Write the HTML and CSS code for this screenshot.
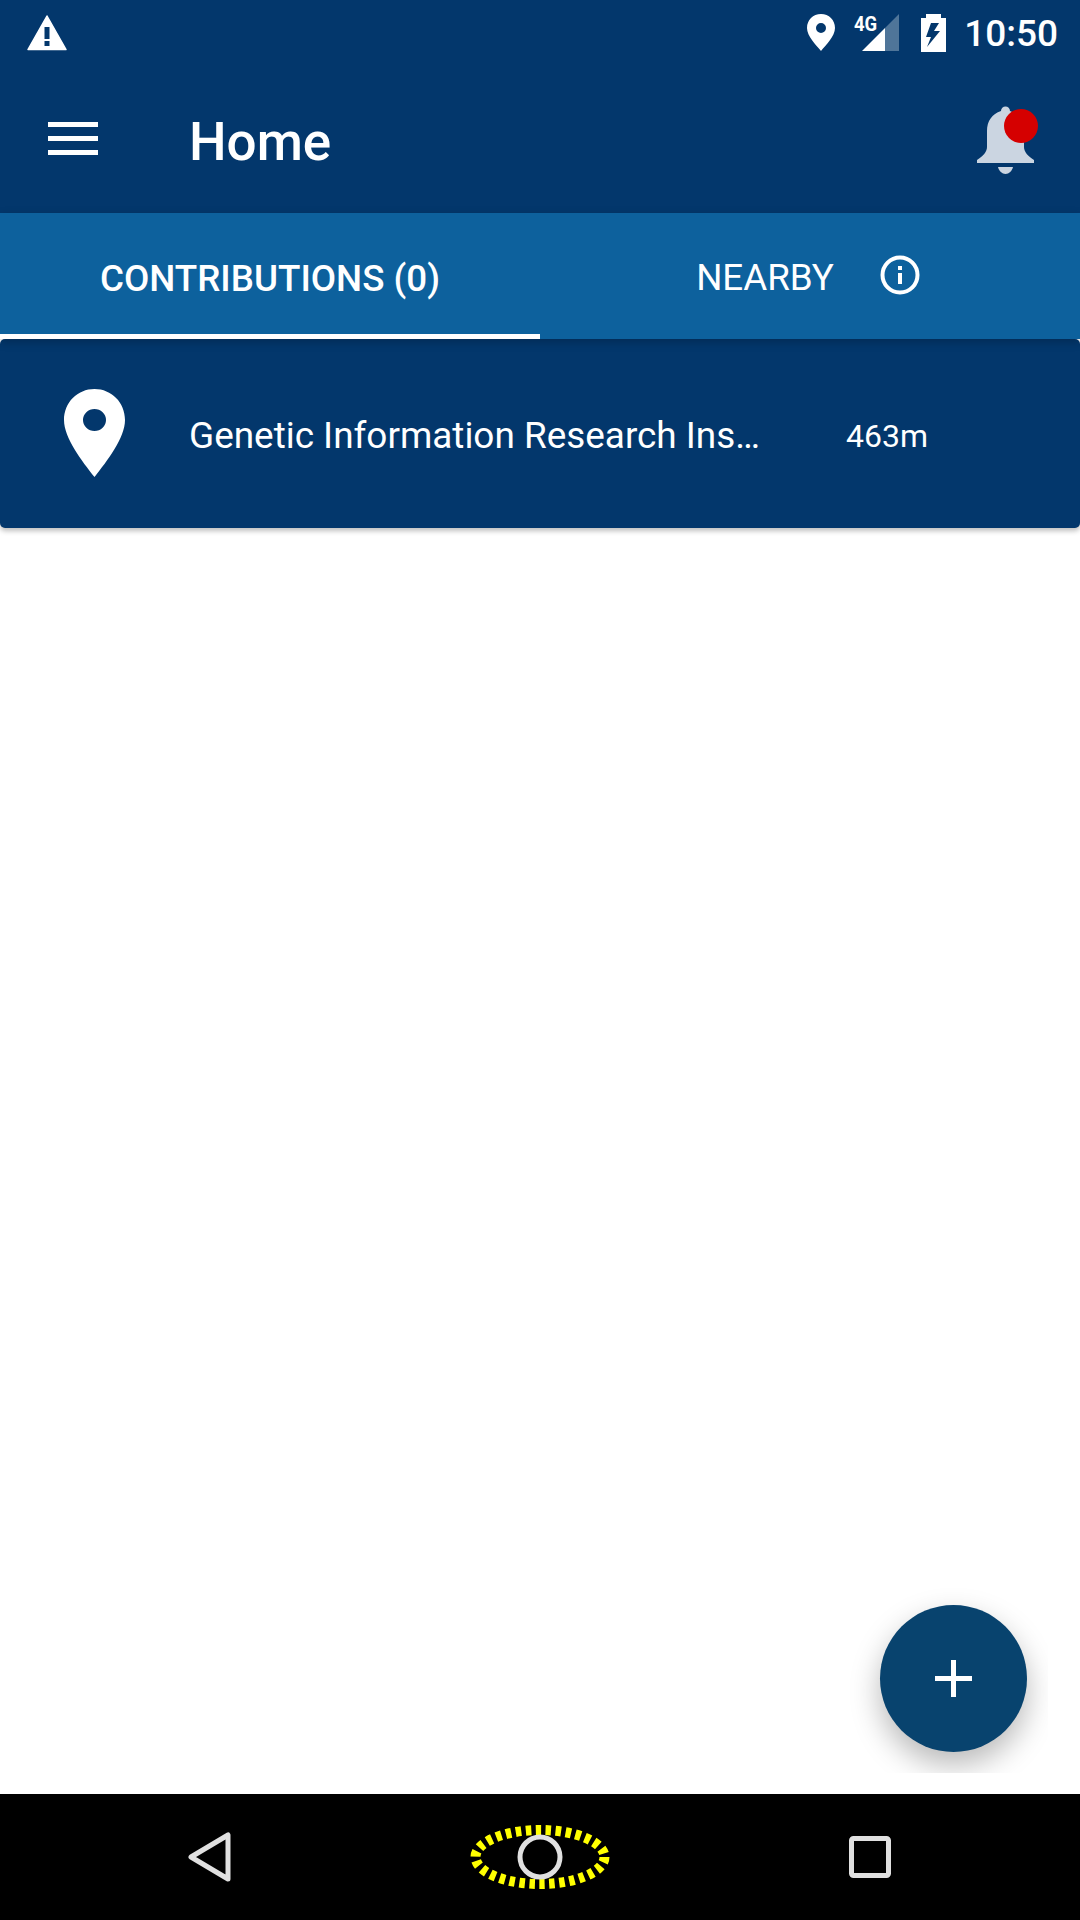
FILE: index.html
```html
<!DOCTYPE html>
<html lang="en">
<head>
    <meta charset="UTF-8">
    <meta name="viewport" content="width=device-width, initial-scale=1.0">
    <title>Home</title>
    <link rel="stylesheet" href="styles.css">
</head>
<body>
<div class="screen">
    <!-- status bar -->
    <div class="status-bar">
        <svg class="warn-icon" width="40" height="36" viewBox="0 0 40 36">
            <path fill="#fff" fill-rule="evenodd" stroke="#fff" stroke-width="1.5" stroke-linejoin="round" d="M20 1 L39 34.5 H1 Z"/>
            <path fill="#03376c" d="M17.5 12 H22.5 V24 H17.5 Z M17.5 26 H22.5 V31 H17.5 Z"/>
        </svg>
        <div class="status-right">
            <svg class="st-pin" width="28" height="37" viewBox="0 0 28 37">
                <path fill="#fff" fill-rule="evenodd" d="M14 0 C6 0 0 6 0 14 C0 22 9 31 14 37 C19 31 28 22 28 14 C28 6 22 0 14 0 Z M14 9 A5 5 0 1 1 14 19 A5 5 0 1 1 14 9 Z"/>
            </svg>
            <div class="signal">
                <span class="signal-text">4G</span>
                <svg width="46" height="37" viewBox="0 0 46 37">
                    <path fill="#4f7599" d="M46 0 V37 H32 V14 Z"/>
                    <path fill="#fff" d="M32 14 V37 H9 Z"/>
                </svg>
            </div>
            <svg class="st-battery" width="25" height="38" viewBox="0 0 25 38">
                <path fill="#fff" fill-rule="evenodd" d="M5 0 H20 V4 H25 V38 H0 V4 H5 Z M10 9 L5 23 H10 L6 33 L19 17 H13 L18 9 Z"/>
            </svg>
            <span class="clock">10:50</span>
        </div>
    </div>

    <!-- app bar -->
    <div class="app-bar">
        <div class="menu-btn">
            <span></span>
            <span></span>
            <span></span>
        </div>
        <div class="title">Home</div>
        <div class="bell">
            <svg width="57" height="69" viewBox="0 0 57 69">
                <path fill="#cbd5e1" d="M24 6 A4.5 4.5 0 0 1 33 6 C42 9 47 16 47 26 V42 C47 47 51 51 57 55 V58 H0 V55 C6 51 10 47 10 42 V26 C10 16 15 9 24 6 Z"/>
                <path fill="#cbd5e1" d="M21 62 H36 C35 66 32 69 28.5 69 C25 69 22 66 21 62 Z"/>
            </svg>
            <span class="bell-dot"></span>
        </div>
    </div>

    <!-- tabs -->
    <div class="tabs">
        <div class="tab active">CONTRIBUTIONS (0)</div>
        <div class="tab nearby">
            NEARBY
            <svg width="40" height="40" viewBox="0 0 40 40">
                <circle cx="20" cy="20" r="17.5" fill="none" stroke="#fff" stroke-width="4"/>
                <rect x="18" y="18" width="4" height="11" fill="#fff"/>
                <rect x="18" y="11" width="4" height="4" fill="#fff"/>
            </svg>
        </div>
    </div>

    <div class="content">
        <div class="place-card">
            <div class="place-icon">
                <svg width="61" height="88" viewBox="0 0 61 88">
                    <path fill="#fff" fill-rule="evenodd" d="M30.5 0 C13.5 0 0 13.5 0 31 C0 49 18 72 30.5 88 C43 72 61 49 61 31 C61 13.5 47.5 0 30.5 0 Z M30.5 20 A11.5 11 0 1 1 30.5 42 A11.5 11 0 1 1 30.5 20 Z"/>
                </svg>
            </div>
            <div class="place-name">Genetic Information Research Ins…</div>
            <div class="place-dist">463m</div>
        </div>
    </div>

    <!-- nav bar -->
    <div class="nav-bar">
        <div class="nav-slot">
            <svg width="44" height="50" viewBox="0 0 44 50">
                <path fill="none" stroke="#e0e0e0" stroke-width="5" stroke-linejoin="round" d="M40 3 V47 L3 25 Z"/>
            </svg>
        </div>
        <div class="nav-slot">
            <svg width="140" height="66" viewBox="0 0 140 66">
                <ellipse cx="70" cy="33" rx="64.5" ry="27" fill="none" stroke="#ffff00" stroke-width="10" stroke-dasharray="5.5 4.5"/>
                <circle cx="70" cy="33" r="20" fill="none" stroke="#e0e0e0" stroke-width="5"/>
            </svg>
        </div>
        <div class="nav-slot">
            <svg width="42" height="42" viewBox="0 0 42 42">
                <rect x="2.5" y="2.5" width="37" height="37" rx="2" fill="none" stroke="#e0e0e0" stroke-width="5"/>
            </svg>
        </div>
    </div>

    <div class="fab-clip">
        <div class="fab">
            <svg width="37" height="37" viewBox="0 0 37 37">
                <path fill="#fff" d="M16 0 H21 V16 H37 V21 H21 V37 H16 V21 H0 V16 H16 Z"/>
            </svg>
        </div>
    </div>
</div>
</body>
</html>
```

FILE: styles.css
```css
* {
    box-sizing: border-box;
}
body {
    margin: 0;
    font-family: Roboto, sans-serif;
    color: #fff;
    background-color: #fff;
}
.screen {
    position: relative;
    display: flex;
    flex-direction: column;
    width: 1080px;
    height: 1920px;
    overflow: hidden;
}

.status-bar {
    display: flex;
    align-items: flex-start;
    justify-content: space-between;
    height: 63px;
    padding: 14px 22px 0 27px;
    background-color: #03376c;
}
.warn-icon {
    margin-top: 1px;
}
.status-right {
    display: flex;
    align-items: flex-start;
}
.signal {
    position: relative;
    margin-left: 18px;
    width: 46px;
    height: 37px;
}
.signal-text {
    position: absolute;
    left: 1px;
    top: 0;
    font-size: 21px;
    line-height: 21px;
    font-weight: 700;
    transform: scaleX(.88);
    transform-origin: left;
}
.st-battery {
    margin-left: 22px;
}
.clock {
    margin-left: 18px;
    font-size: 37px;
    font-weight: 500;
    line-height: 40px;
}

.app-bar {
    display: flex;
    align-items: center;
    height: 150px;
    background-color: #03376c;
}
.menu-btn {
    display: flex;
    flex-direction: column;
    gap: 9px;
    margin-left: 48px;
    width: 50px;
}
.menu-btn span {
    display: block;
    height: 5px;
    background-color: #fff;
}
.title {
    flex: 1;
    margin-left: 91px;
    padding-top: 7px;
    font-size: 53px;
    font-weight: 500;
}
.bell {
    position: relative;
    width: 57px;
    height: 68px;
    margin-right: 46px;
    margin-top: 2px;
}
.bell svg {
    display: block;
}
.bell-dot {
    position: absolute;
    top: 4px;
    left: 27px;
    width: 34px;
    height: 34px;
    border-radius: 50%;
    background-color: #d50000;
}

.tabs {
    position: relative;
    z-index: 1;
    display: flex;
    height: 126px;
    background-color: #0d619d;
    box-shadow: 0 3px 9px rgba(0, 0, 0, .22);
}
.tab {
    flex: 0 0 50%;
    display: flex;
    align-items: center;
    justify-content: center;
    font-size: 36.75px;
}
.tab.active {
    padding-top: 9px;
    font-weight: 500;
    border-bottom: 5px solid #fff;
}
.tab.nearby {
    gap: 46px;
    padding-top: 3px;
    padding-right: 4px;
}
.tab.nearby svg {
    margin-bottom: 5px;
}

.content {
    flex: 1;
}
.place-card {
    display: flex;
    align-items: center;
    height: 189px;
    background-color: #03376c;
    border-radius: 5px;
    box-shadow: 0 3px 5px rgba(0, 0, 0, .25);
}
.place-icon {
    width: 189px;
    padding-left: 64px;
    padding-bottom: 1px;
}
.place-icon svg {
    display: block;
}
.place-name {
    width: 570px;
    padding-top: 3px;
    font-size: 36.9px;
    white-space: nowrap;
}
.place-dist {
    margin-left: 87px;
    padding-top: 5px;
    font-size: 32px;
}

.nav-bar {
    display: flex;
    justify-content: center;
    align-items: center;
    height: 126px;
    background-color: #000;
}
.nav-slot {
    display: flex;
    justify-content: center;
    width: 330px;
}

.fab-clip {
    position: absolute;
    right: 32px;
    bottom: 147px;
    padding: 30px 21px 21px 40px;
    overflow: hidden;
}
.fab {
    display: flex;
    align-items: center;
    justify-content: center;
    width: 147px;
    height: 147px;
    border-radius: 50%;
    background-color: #08436e;
    box-shadow: 0 13px 30px rgba(0, 0, 0, .28);
}
```
